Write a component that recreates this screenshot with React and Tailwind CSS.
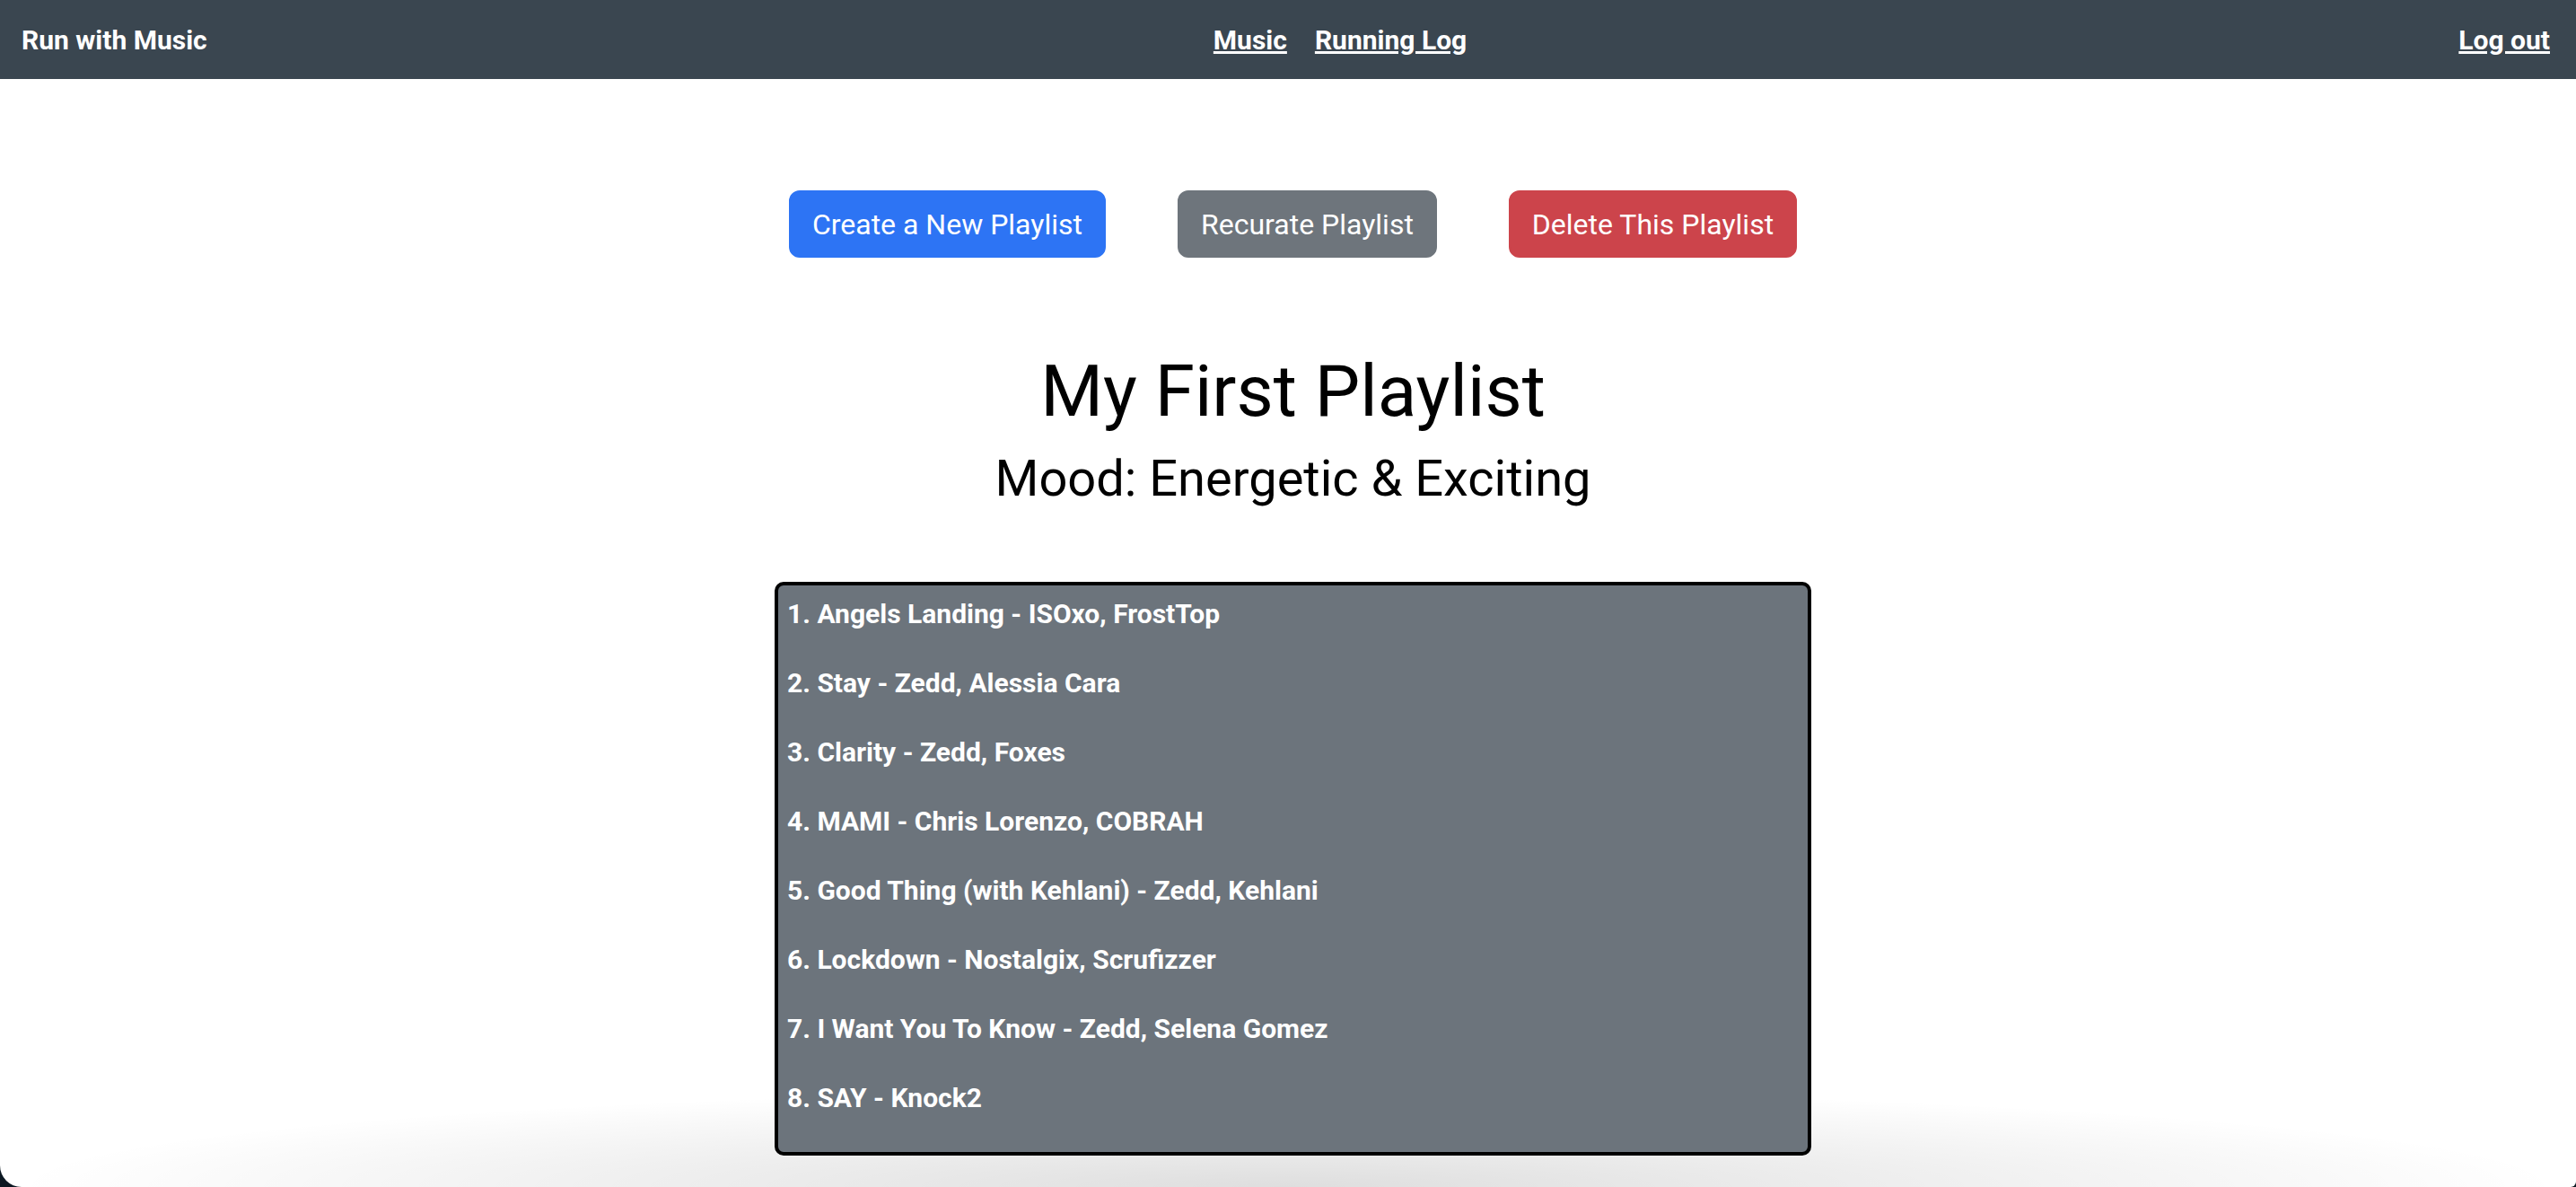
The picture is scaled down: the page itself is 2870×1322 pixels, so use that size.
import React from "react";

const songs = [
  "Angels Landing - ISOxo, FrostTop",
  "Stay - Zedd, Alessia Cara",
  "Clarity - Zedd, Foxes",
  "MAMI - Chris Lorenzo, COBRAH",
  "Good Thing (with Kehlani) - Zedd, Kehlani",
  "Lockdown - Nostalgix, Scrufizzer",
  "I Want You To Know - Zedd, Selena Gomez",
  "SAY - Knock2",
];

const App = () => {
  return (
    <div className="h-[1322px] bg-[#0c1822] font-['Roboto',sans-serif]">
      <div className="relative h-full overflow-hidden rounded-bl-[24px] rounded-br-[6px] bg-white">
        {/* soft shadow along the bottom edge */}
        <div className="absolute bottom-0 left-0 right-0 h-[110px] bg-[radial-gradient(ellipse_at_bottom,rgba(0,0,0,0.13),rgba(0,0,0,0)_70%)]"></div>

        <div className="relative z-10">
          {/* Navbar */}
          <nav className="flex h-[88px] items-center justify-between bg-[#3a4650] pl-[24px] pr-[29px] text-[30px] font-bold text-white">
            <span>Run with Music</span>
            <div className="ml-[16px] flex gap-[31px]">
              <a href="#" className="underline">Music</a>
              <a href="#" className="underline">Running Log</a>
            </div>
            <a href="#" className="underline">Log out</a>
          </nav>

          <main className="pl-[11px]">
            {/* Actions */}
            <div className="mt-[124px] flex justify-center gap-[80px] text-[32px] text-white">
              <button className="flex h-[75px] items-center rounded-[12px] border-2 border-[#2d74f4] bg-[#2d74f4] px-[24px]">
                Create a New Playlist
              </button>
              <button className="flex h-[75px] items-center rounded-[12px] border-2 border-[#6e757c] bg-[#6e757c] px-[24px]">
                Recurate Playlist
              </button>
              <button className="flex h-[75px] items-center rounded-[12px] border-2 border-[#cc444b] bg-[#cc444b] px-[24px]">
                Delete This Playlist
              </button>
            </div>

            <h1 className="mt-[101px] text-center text-[80px] leading-[96px] text-black">My First Playlist</h1>
            <h2 className="mt-[16px] text-center text-[56px] leading-[67px] text-black">Mood: Energetic &amp; Exciting</h2>

            {/* Song list */}
            <div className="mx-auto mt-[81px] w-[1155px] rounded-[10px] border-4 border-black bg-[#6c747c] pb-[6px] pl-[10px] pt-[9px]">
              {songs.map((song, index) => (
                <p key={index} className="mb-[32px] text-[30px] font-bold leading-[45px] text-white">
                  {index + 1}. {song}
                </p>
              ))}
            </div>
          </main>
        </div>
      </div>
    </div>
  );
};

export default App;
